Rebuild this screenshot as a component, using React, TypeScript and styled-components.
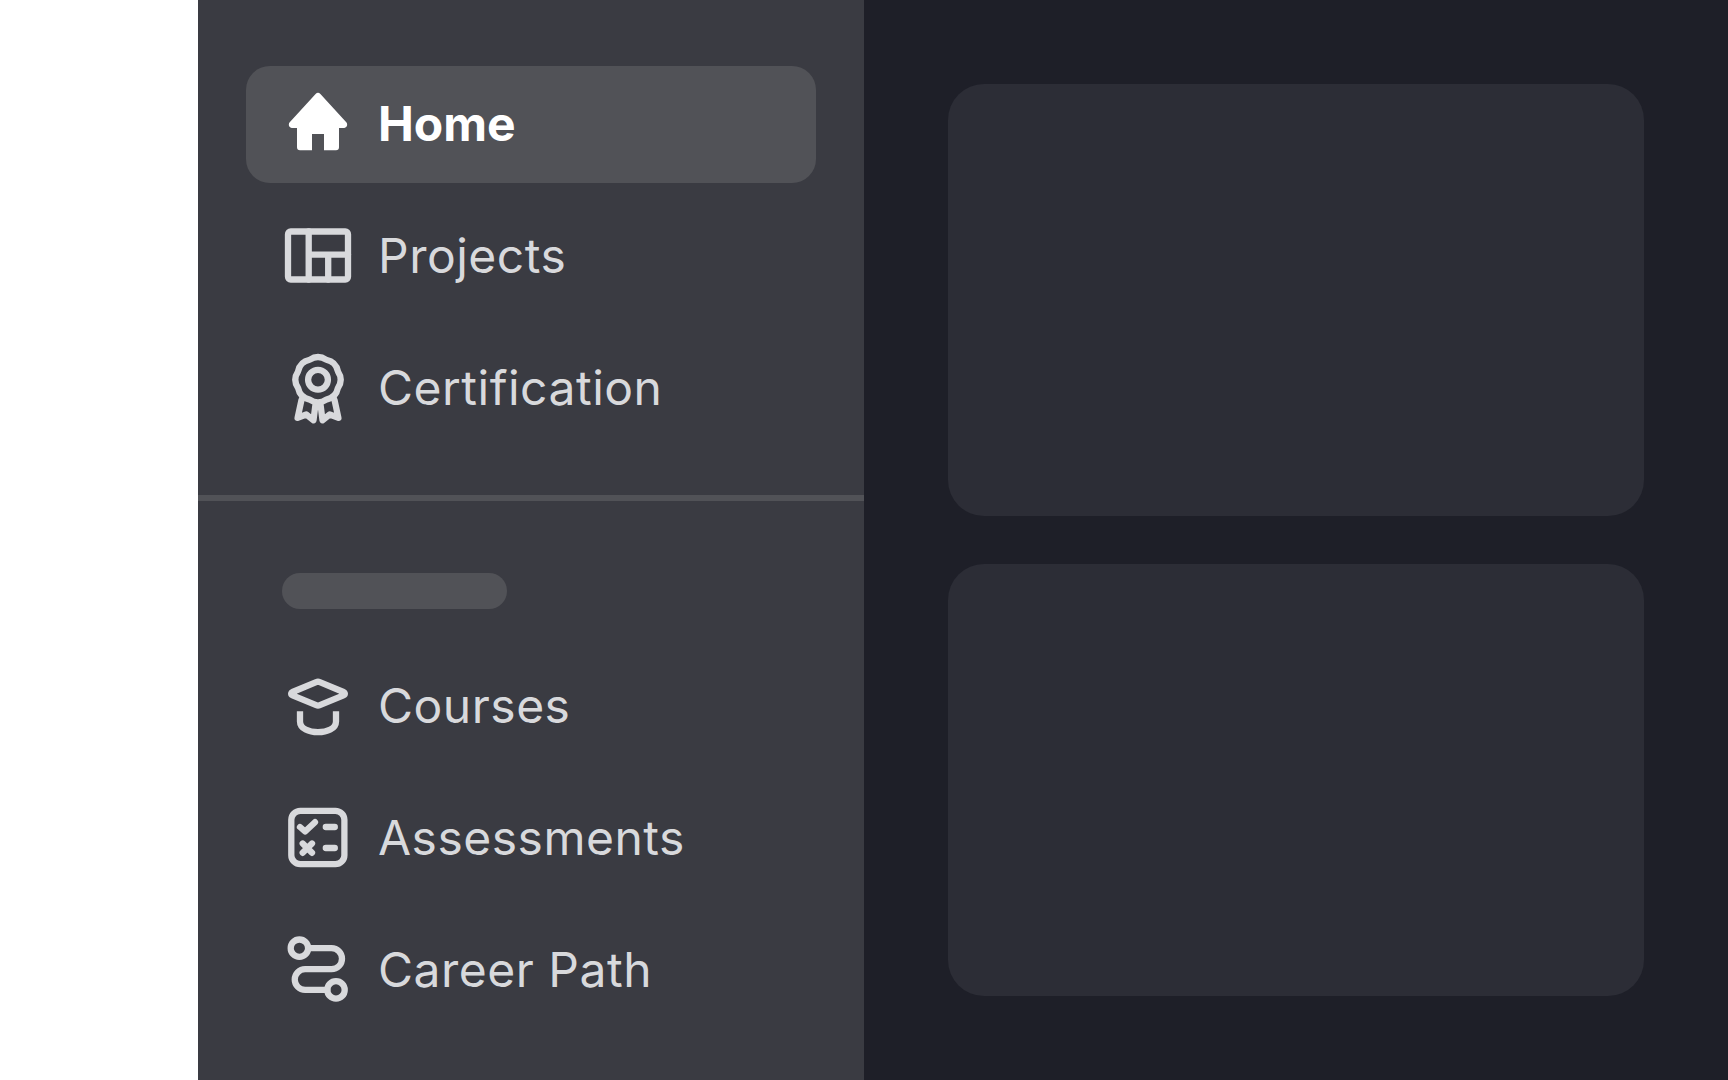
import React from "react";
import styled, { createGlobalStyle } from "styled-components";

const GlobalStyle = createGlobalStyle`
  html, body {
    margin: 0;
    padding: 0;
    background: #ffffff;
  }
  * {
    box-sizing: border-box;
  }
`;

// scalloped outline of the certification badge
function badgePath(cx: number, cy: number, inner: number, outer: number, bumps: number) {
  let d = "";
  for (let i = 0; i < bumps; i++) {
    const a0 = ((i - 0.5) / bumps) * Math.PI * 2 - Math.PI / 2;
    const a1 = (i / bumps) * Math.PI * 2 - Math.PI / 2;
    const a2 = ((i + 0.5) / bumps) * Math.PI * 2 - Math.PI / 2;
    const sx = cx + inner * Math.cos(a0);
    const sy = cy + inner * Math.sin(a0);
    const qx = cx + outer * Math.cos(a1);
    const qy = cy + outer * Math.sin(a1);
    const ex = cx + inner * Math.cos(a2);
    const ey = cy + inner * Math.sin(a2);
    if (i === 0) d += `M${sx.toFixed(2)} ${sy.toFixed(2)}`;
    d += `Q${qx.toFixed(2)} ${qy.toFixed(2)} ${ex.toFixed(2)} ${ey.toFixed(2)}`;
  }
  return d + "Z";
}

const HomeIcon = () => (
  <Glyph viewBox="0 0 24 24">
    <path
      fill="currentColor"
      stroke="none"
      d="M11.2 1.7a1.1 1.1 0 0 1 1.6 0l8.7 9.5c.5.7.1 1.8-.8 1.8H19v6.4a1 1 0 0 1-1 1h-4v-5.4h-4v5.4H6a1 1 0 0 1-1-1V13H3.3c-.9 0-1.3-1.1-.8-1.8z"
    />
  </Glyph>
);

const ProjectsIcon = () => (
  <Glyph viewBox="0 0 24 24">
    <rect x="2" y="3.5" width="20" height="16" rx="0.9" />
    <path d="M8.9 3.5v16M8.9 11.2H22M15.4 11.2v8.3" />
  </Glyph>
);

const CertificationIcon = () => (
  <Glyph viewBox="0 0 24 24">
    <path d={badgePath(12, 8.9, 7.2, 8.5, 8)} />
    <circle cx="12" cy="8.9" r="3.3" />
    <path d="M6.5 15.6 5.2 21.6l2.9-1.1 2.4 1.9.6-4.8M17.5 15.6l1.3 6-2.9-1.1-2.4 1.9-.6-4.8" />
  </Glyph>
);

const CoursesIcon = () => (
  <Glyph viewBox="0 0 24 24">
    <path d="M11.4 3.7a1.6 1.6 0 0 1 1.2 0l7.9 3.3c.6.3.6.9 0 1.1l-7.9 3.3a1.6 1.6 0 0 1-1.2 0L3.5 8.1c-.6-.2-.6-.8 0-1.1z" />
    <path strokeLinecap="butt" d="M6 13.4v3.4c0 2.4 3 3.6 6 3.6s6-1.2 6-3.6v-3.4" />
  </Glyph>
);

const AssessmentsIcon = () => (
  <Glyph viewBox="0 0 24 24">
    <rect x="3.1" y="2.6" width="17.7" height="17.8" rx="3" />
    <path d="M6 8l1.7 1.5L11 6.4M14.6 8h3M14.6 15h3M6.9 13.5l3.1 3.1M10 13.5l-3.1 3.1" />
  </Glyph>
);

const CareerIcon = () => (
  <Glyph viewBox="0 0 24 24">
    <circle cx="5.8" cy="4.4" r="2.9" />
    <circle cx="18" cy="18.3" r="2.9" />
    <path d="M8.7 4.4h7.8a3.5 3.5 0 0 1 0 7H7.7a3.45 3.45 0 0 0 0 6.9h7.4" />
  </Glyph>
);

const topItems = [
  { label: "Home", icon: <HomeIcon />, active: true },
  { label: "Projects", icon: <ProjectsIcon /> },
  { label: "Certification", icon: <CertificationIcon /> },
];

const bottomItems = [
  { label: "Courses", icon: <CoursesIcon /> },
  { label: "Assessments", icon: <AssessmentsIcon /> },
  { label: "Career Path", icon: <CareerIcon /> },
];

/**
 * App Component
 */
export default function App() {
  return (
    <>
      <GlobalStyle />
      <Page>
        <Sidebar>
          <NavGroup>
            {topItems.map((item) => (
              <NavRow key={item.label} $active={item.active}>
                {item.icon}
                <NavLabel>{item.label}</NavLabel>
              </NavRow>
            ))}
          </NavGroup>
          <Divider />
          <SectionLabel />
          <NavGroup>
            {bottomItems.map((item) => (
              <NavRow key={item.label}>
                {item.icon}
                <NavLabel>{item.label}</NavLabel>
              </NavRow>
            ))}
          </NavGroup>
        </Sidebar>
        <Main>
          <Card />
          <Card />
        </Main>
      </Page>
    </>
  );
}

const Page = styled.div`
  display: flex;
  width: 100%;
  height: 1080px;
  padding-left: 198px;
  overflow: hidden;
  background: #ffffff;
  font-family: Inter, "Liberation Sans", sans-serif;
`;

const Sidebar = styled.aside`
  width: 666px;
  flex-shrink: 0;
  padding-top: 66px;
  background: #3a3b42;
`;

const NavGroup = styled.nav`
  display: flex;
  flex-direction: column;
  gap: 15px;
  padding: 0 48px;
`;

const NavRow = styled.div<{ $active?: boolean }>`
  display: flex;
  align-items: center;
  gap: 24px;
  height: 117px;
  padding: 0 36px;
  border-radius: 24px;
  font-size: 48px;
  line-height: 58px;
  font-weight: ${(props) => (props.$active ? 700 : 400)};
  letter-spacing: ${(props) => (props.$active ? "0" : "0.5px")};
  color: ${(props) => (props.$active ? "#ffffff" : "#d8d9dc")};
  background: ${(props) => (props.$active ? "#515257" : "transparent")};
`;

const NavLabel = styled.span`
  padding-bottom: 2px;
`;

const Glyph = styled.svg`
  width: 72px;
  height: 72px;
  flex-shrink: 0;
  fill: none;
  stroke: currentColor;
  stroke-width: 2.1;
  stroke-linecap: round;
  stroke-linejoin: round;
`;

const Divider = styled.div`
  height: 6px;
  margin: 48px 0 72px;
  background: #515257;
`;

const SectionLabel = styled.div`
  width: 225px;
  height: 36px;
  margin: 0 0 39px 84px;
  border-radius: 18px;
  background: #515257;
`;

const Main = styled.main`
  flex: 1;
  display: flex;
  flex-direction: column;
  gap: 48px;
  padding: 84px 84px 0;
  background: #1e1f28;
`;

const Card = styled.section`
  height: 432px;
  border-radius: 36px;
  background: #2c2d36;
`;
